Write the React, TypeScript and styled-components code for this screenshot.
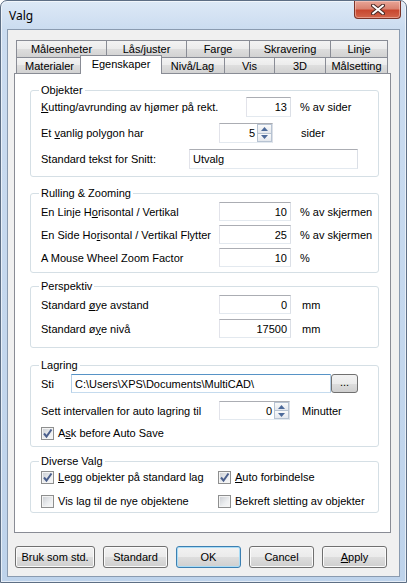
import styled, { createGlobalStyle, css } from "styled-components";

const GlobalStyle = createGlobalStyle`
    html, body {
        margin: 0;
        padding: 0;
        background: #ffffff;
    }
    body {
        font-family: "Liberation Sans", Arial, sans-serif;
        font-size: 11px;
        color: #000;
    }
`;

const CloseIcon = () => (
    <svg width="14" height="11" viewBox="0 0 14 11">
        <path d="M2 1.5 L12 9.5 M12 1.5 L2 9.5" stroke="#4a2a26" strokeWidth="4" strokeLinecap="round" />
        <path d="M2 1.5 L12 9.5 M12 1.5 L2 9.5" stroke="#ffffff" strokeWidth="2" strokeLinecap="round" />
    </svg>
);

const Arrow = ({ up }: { up?: boolean }) => (
    <svg width="7" height="4" viewBox="0 0 7 4">
        <path d={up ? "M0 4 L3.5 0 L7 4 Z" : "M0 0 L3.5 4 L7 0 Z"} fill="#4d6a9a" />
    </svg>
);

const Tick = () => (
    <svg width="11" height="11" viewBox="0 0 11 11">
        <path d="M2 5.5 L4.5 8.5 L9.5 1.5" stroke="#4b5f8c" strokeWidth="2" fill="none" />
    </svg>
);

const Spin = ({ w, value }: { w: number; value: string }) => (
    <SpinBox $w={w}>
        <SpinText>{value}</SpinText>
        <SpinButtons>
            <SpinBtn>
                <Arrow up />
            </SpinBtn>
            <SpinBtn>
                <Arrow />
            </SpinBtn>
        </SpinButtons>
    </SpinBox>
);

const Check = ({ checked, w, children }: { checked?: boolean; w?: number; children: React.ReactNode }) => (
    <CheckItem $w={w}>
        <Box>{checked && <Tick />}</Box>
        <span>{children}</span>
    </CheckItem>
);

export default function App() {
    return (
        <>
            <GlobalStyle />
            <Window>
                <TitleBar>
                    <Title>Valg</Title>
                    <CloseButton>
                        <CloseIcon />
                    </CloseButton>
                </TitleBar>
                <Client>
                    <TabRow>
                        <Tab $w={90} $h={17}>Måleenheter</Tab>
                        <Tab $w={80} $h={17}>Lås/juster</Tab>
                        <Tab $w={63} $h={17}>Farge</Tab>
                        <Tab $w={81} $h={17}>Skravering</Tab>
                        <Tab $w={58} $h={17} $last>Linje</Tab>
                    </TabRow>
                    <TabRow>
                        <Tab $w={66} $h={16}>Materialer</Tab>
                        <Tab $w={82} $h={19} $active>Egenskaper</Tab>
                        <Tab $w={64} $h={16}>Nivå/Lag</Tab>
                        <Tab $w={50} $h={16}>Vis</Tab>
                        <Tab $w={51} $h={16}>3D</Tab>
                        <Tab $w={63} $h={16} $last>Målsetting</Tab>
                    </TabRow>
                    <Panel>
                        <Group $mt={0} $pt={0} $pb={7}>
                            <Legend>Objekter</Legend>
                            <Row $h={20}>
                                <Label $w={205}><u>K</u>utting/avrunding av hjømer på rekt.</Label>
                                <Field $w={45}>13</Field>
                                <Unit $ml={9}>% av sider</Unit>
                            </Row>
                            <Row $h={20} $mt={6}>
                                <Label $w={178}>Et <u>v</u>anlig polygon har</Label>
                                <Spin w={54} value="5" />
                                <Unit $ml={28}>sider</Unit>
                            </Row>
                            <Row $h={20} $mt={6}>
                                <Label $w={148}>Standard tekst for Snitt:</Label>
                                <Field $w={169} $left>Utvalg</Field>
                            </Row>
                        </Group>

                        <Group $mt={10} $pt={2} $pb={5}>
                            <Legend>Rulling &amp; Zooming</Legend>
                            <Row $h={19}>
                                <Label $w={178}>En Linje H<u>o</u>risontal / Vertikal</Label>
                                <Field $w={72}>10</Field>
                                <Unit $ml={9}>% av skjermen</Unit>
                            </Row>
                            <Row $h={19} $mt={4}>
                                <Label $w={178}>En Side Ho<u>r</u>isontal / Vertikal Flytter</Label>
                                <Field $w={72}>25</Field>
                                <Unit $ml={9}>% av skjermen</Unit>
                            </Row>
                            <Row $h={19} $mt={4}>
                                <Label $w={178}>A Mouse Wheel Zoom Factor</Label>
                                <Field $w={72}>10</Field>
                                <Unit $ml={9}>%</Unit>
                            </Row>
                        </Group>

                        <Group $mt={7} $pt={2} $pb={9}>
                            <Legend>Perspektiv</Legend>
                            <Row $h={19}>
                                <Label $w={178}>Standard <u>ø</u>ye avstand</Label>
                                <Field $w={72}>0</Field>
                                <Unit $ml={11}>mm</Unit>
                            </Row>
                            <Row $h={19} $mt={5}>
                                <Label $w={178}>Standard ø<u>y</u>e nivå</Label>
                                <Field $w={72}>17500</Field>
                                <Unit $ml={11}>mm</Unit>
                            </Row>
                        </Group>

                        <Group $mt={11} $pt={2} $pb={6}>
                            <Legend>Lagring</Legend>
                            <Row $h={19}>
                                <Label $w={30}>Sti</Label>
                                <Field $w={260} $left $focus>{"C:\\Users\\XPS\\Documents\\MultiCAD\\"}</Field>
                                <SmallButton>...</SmallButton>
                            </Row>
                            <Row $h={19} $mt={8}>
                                <Label $w={178}>Sett intervallen for auto lagring til</Label>
                                <Spin w={71} value="0" />
                                <Unit $ml={12}>Minutter</Unit>
                            </Row>
                            <Row $h={14} $mt={6}>
                                <Check checked>A<u>s</u>k before Auto Save</Check>
                            </Row>
                        </Group>

                        <Group $mt={8} $pt={1} $pb={3}>
                            <Legend>Diverse Valg</Legend>
                            <Row $h={16}>
                                <Check checked w={177}><u>L</u>egg objekter på standard lag</Check>
                                <Check checked><u>A</u>uto forbindelse</Check>
                            </Row>
                            <Row $h={16} $mt={8}>
                                <Check w={177}>Vis lag til de nye objektene</Check>
                                <Check>Bekreft sletting av objekter</Check>
                            </Row>
                        </Group>
                    </Panel>
                    <ButtonBar>
                        <Button $w={80}>Bruk som std.</Button>
                        <Button $w={65}>Standard</Button>
                        <Button $w={65} $default>OK</Button>
                        <Button $w={65}>Cancel</Button>
                        <Button $w={65}><u>A</u>pply</Button>
                    </ButtonBar>
                </Client>
            </Window>
        </>
    );
}

/* ======= Styled Components ======= */

const Window = styled.div`
    box-sizing: border-box;
    width: 407px;
    height: 583px;
    border: 1px solid #5d6e84;
    border-radius: 7px 7px 0 0;
    background: linear-gradient(to bottom, #dde9f6 0px, #cbdcf0 28px, #bed3eb 100%);
    box-shadow: inset 0 0 0 1px rgba(255, 255, 255, 0.6);
    display: flex;
    flex-direction: column;
`;

const TitleBar = styled.div`
    height: 28px;
    display: flex;
    align-items: flex-start;
    padding-left: 8px;
`;

const Title = styled.div`
    margin-top: 7px;
    font-family: "Noto Sans", "Liberation Sans", sans-serif;
    font-size: 12px;
    line-height: 16px;
    color: #000;
`;

const CloseButton = styled.div`
    margin-left: auto;
    margin-right: 5px;
    box-sizing: border-box;
    width: 47px;
    height: 18px;
    border: 1px solid #7b3328;
    border-top: none;
    border-radius: 0 0 4px 4px;
    background: linear-gradient(to bottom, #e8a597 0%, #d98371 45%, #c8472f 55%, #d2654b 100%);
    box-shadow: inset 0 0 0 1px rgba(255, 220, 210, 0.45);
    display: flex;
    align-items: center;
    justify-content: center;
`;

const Client = styled.div`
    flex: 1;
    margin: 0 6px 5px;
    border: 1px solid #8a9bb0;
    background: #f0f0f0;
    display: flex;
    flex-direction: column;
    padding: 10px 8px 0 6px;
`;

const TabRow = styled.div`
    display: flex;
    padding-left: 2px;
    height: auto;
`;

const Tab = styled.div<{ $w: number; $h: number; $last?: boolean; $active?: boolean }>`
    box-sizing: border-box;
    width: ${(p) => p.$w}px;
    height: ${(p) => p.$h}px;
    flex-shrink: 0;
    border: 1px solid #898c95;
    border-bottom: none;
    border-right: ${(p) => (p.$last ? "1px solid #898c95" : "none")};
    background: linear-gradient(to bottom, #f3f3f3 0%, #ebebeb 50%, #dedede 50%, #d2d2d2 100%);
    display: flex;
    align-items: center;
    justify-content: center;
    white-space: nowrap;
    ${(p) =>
        p.$active &&
        css`
            background: #ffffff;
            border-right: 1px solid #898c95;
            margin: -2px -2px -1px -2px;
            padding-bottom: 2px;
            position: relative;
            z-index: 1;
        `}
`;

const Panel = styled.div`
    box-sizing: border-box;
    height: 460px;
    background: #ffffff;
    border: 1px solid #898c95;
    padding: 10px 11px 0 15px;
    display: flex;
    flex-direction: column;
`;

const Group = styled.fieldset<{ $mt: number; $pt: number; $pb: number }>`
    margin: ${(p) => p.$mt}px 0 0;
    padding: ${(p) => p.$pt}px 10px ${(p) => p.$pb}px;
    border: 1px solid #d5dfe5;
    border-radius: 3px;
    min-width: 0;
    display: flex;
    flex-direction: column;
`;

const Legend = styled.legend`
    padding: 0 2px;
    margin-left: -2px;
    font-size: 11px;
    line-height: 13px;
`;

const Row = styled.div<{ $h: number; $mt?: number }>`
    display: flex;
    align-items: center;
    height: ${(p) => p.$h}px;
    margin-top: ${(p) => p.$mt ?? 0}px;
`;

const Label = styled.span<{ $w: number }>`
    width: ${(p) => p.$w}px;
    flex-shrink: 0;
    white-space: nowrap;
`;

const Field = styled.div<{ $w: number; $left?: boolean; $focus?: boolean }>`
    box-sizing: border-box;
    width: ${(p) => p.$w}px;
    height: 100%;
    flex-shrink: 0;
    border: 1px solid;
    border-color: ${(p) => (p.$focus ? "#5793c6 #b5cfe7 #c5dbee #b5cfe7" : "#abadb3 #dbdfe6 #e3e9ef #e2e3ea")};
    background: #ffffff;
    padding: 0 3px;
    display: flex;
    align-items: center;
    justify-content: ${(p) => (p.$left ? "flex-start" : "flex-end")};
    white-space: nowrap;
    overflow: hidden;
`;

const Unit = styled.span<{ $ml: number }>`
    margin-left: ${(p) => p.$ml}px;
    white-space: nowrap;
`;

const SpinBox = styled.div<{ $w: number }>`
    box-sizing: border-box;
    width: ${(p) => p.$w}px;
    height: 100%;
    flex-shrink: 0;
    display: flex;
    border: 1px solid;
    border-color: #abadb3 #dbdfe6 #e3e9ef #e2e3ea;
    background: #ffffff;
`;

const SpinText = styled.div`
    flex: 1;
    display: flex;
    align-items: center;
    justify-content: flex-end;
    padding-right: 2px;
`;

const SpinButtons = styled.div`
    width: 15px;
    display: flex;
    flex-direction: column;
`;

const SpinBtn = styled.div`
    flex: 1;
    box-sizing: border-box;
    border: 1px solid #b7c3d2;
    background: linear-gradient(to bottom, #fafafa, #e4e8ee);
    display: flex;
    align-items: center;
    justify-content: center;
    & + & {
        border-top: none;
    }
`;

const SmallButton = styled.div`
    box-sizing: border-box;
    width: 27px;
    height: 100%;
    border: 1px solid #707070;
    border-radius: 3px;
    background: linear-gradient(to bottom, #f2f2f2 0%, #ebebeb 50%, #dddddd 51%, #cfcfcf 100%);
    display: flex;
    align-items: center;
    justify-content: center;
    padding-bottom: 3px;
`;

const CheckItem = styled.div<{ $w?: number }>`
    display: flex;
    align-items: center;
    gap: 4px;
    width: ${(p) => (p.$w ? `${p.$w}px` : "auto")};
    flex-shrink: 0;
    white-space: nowrap;
`;

const Box = styled.div`
    box-sizing: border-box;
    width: 13px;
    height: 13px;
    border: 1px solid #8e8f8f;
    background: linear-gradient(135deg, #c9ccd1 0%, #eceef0 60%, #f8f8f8 100%);
    box-shadow: inset 0 0 0 1px #f4f4f4;
    display: flex;
    align-items: center;
    justify-content: center;
`;

const ButtonBar = styled.div`
    display: flex;
    gap: 8px;
    margin-top: 13px;
    padding-left: 1px;
`;

const Button = styled.div<{ $w: number; $default?: boolean }>`
    box-sizing: border-box;
    width: ${(p) => p.$w}px;
    height: 22px;
    border: 1px solid ${(p) => (p.$default ? "#3c7fb1" : "#707070")};
    border-radius: 3px;
    background: linear-gradient(to bottom, #f2f2f2 0%, #ebebeb 50%, #dddddd 51%, #cfcfcf 100%);
    box-shadow: inset 0 0 0 1px ${(p) => (p.$default ? "#a9dcf6" : "#fbfbfb")};
    display: flex;
    align-items: center;
    justify-content: center;
    white-space: nowrap;
`;
